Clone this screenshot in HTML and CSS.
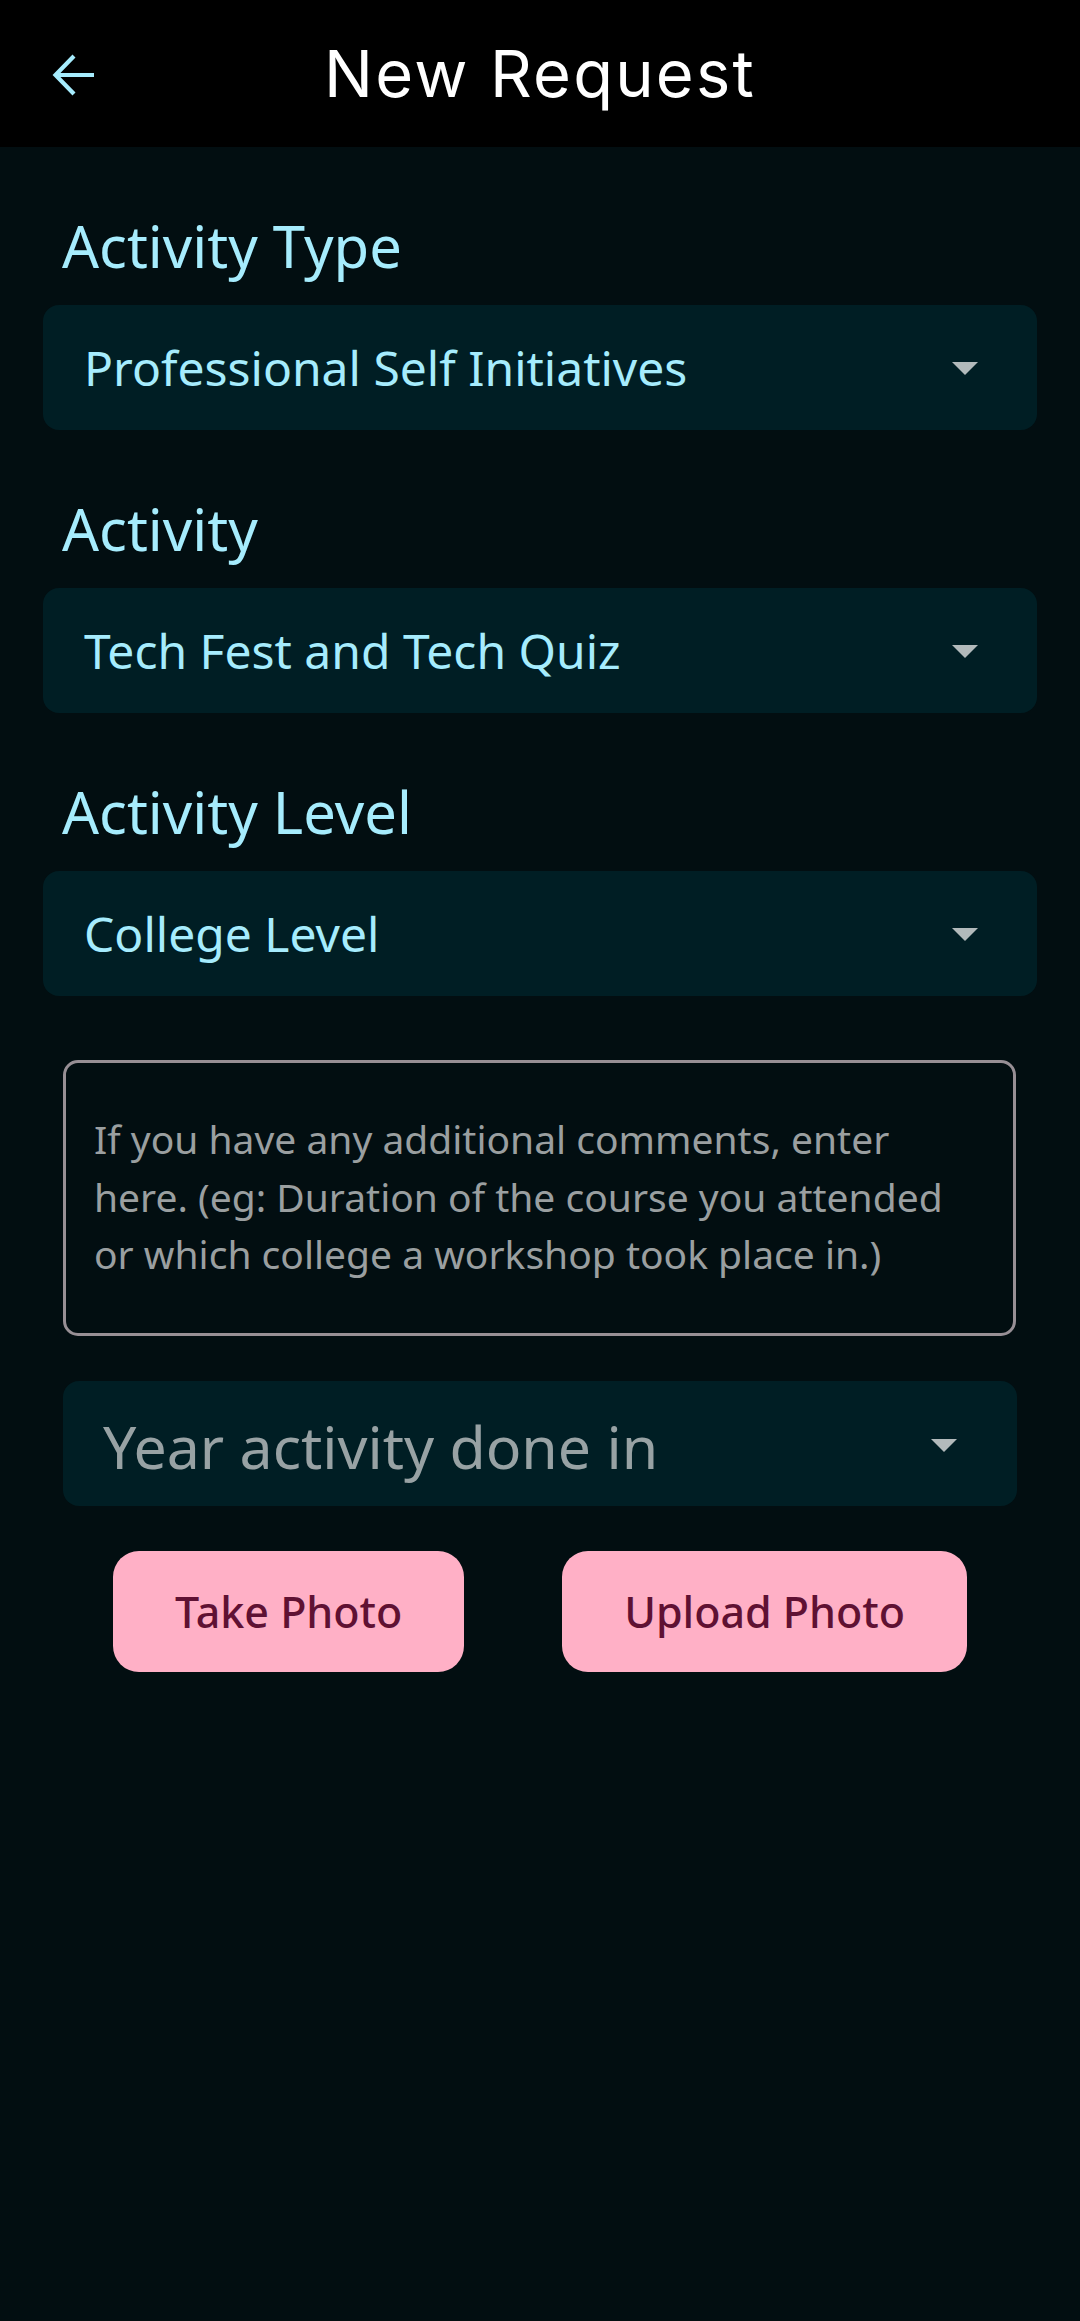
FILE: index.html
```html
<!DOCTYPE html>
<html lang="en">
<head>
<meta charset="utf-8">
<title>New Request</title>
<link rel="stylesheet" href="styles.css">
</head>
<body>
<header class="appbar">
  <button class="back" aria-label="Back">
    <svg viewBox="0 0 44 44" width="44" height="44"><path d="M42 22H4M22 3L3.5 22L22 41" fill="none" stroke="#a6ecfd" stroke-width="4.2" stroke-linecap="butt" stroke-linejoin="miter"/></svg>
  </button>
  <h1 class="title">New Request</h1>
</header>
<main class="content">
  <section class="field">
    <div class="label">Activity Type</div>
    <div class="select"><span class="value">Professional Self Initiatives</span><span class="caret"></span></div>
  </section>
  <section class="field">
    <div class="label">Activity</div>
    <div class="select"><span class="value">Tech Fest and Tech Quiz</span><span class="caret"></span></div>
  </section>
  <section class="field">
    <div class="label">Activity Level</div>
    <div class="select"><span class="value">College Level</span><span class="caret"></span></div>
  </section>
  <div class="comments">
    <span class="ph">If you have any additional comments, enter</span>
    <span class="ph">here. (eg: Duration of the course you attended</span>
    <span class="ph">or which college a workshop took place in.)</span>
  </div>
  <div class="select year"><span class="value">Year activity done in</span><span class="caret"></span></div>
  <div class="actions">
    <button class="btn">Take Photo</button>
    <button class="btn">Upload Photo</button>
  </div>
</main>
</body>
</html>
```

FILE: styles.css
```css
html, body {
  margin: 0;
  padding: 0;
}
body {
  background: #020e11;
  min-height: 2321px;
  font-family: "Noto Sans", "Open Sans", sans-serif;
}
.appbar {
  height: 147px;
  background: #000000;
  display: flex;
  align-items: center;
  justify-content: center;
  position: relative;
}
.back {
  position: absolute;
  left: 52px;
  top: 53px;
  width: 44px;
  height: 44px;
  padding: 0;
  border: 0;
  background: none;
  display: block;
}
.back svg { display: block; }
.title {
  margin: 0;
  font-family: Inter, "Noto Sans", sans-serif;
  font-weight: 400;
  font-size: 65px;
  letter-spacing: 2.2px;
  line-height: 147px;
  color: #ffffff;
}
.content {
  display: flex;
  flex-direction: column;
}
.field {
  padding: 59px 43px 0;
  display: flex;
  flex-direction: column;
  gap: 19px;
}
.label {
  height: 80px;
  line-height: 80px;
  font-size: 58px;
  color: #a6ecfd;
  padding-left: 19px;
}
.select {
  height: 125px;
  border-radius: 16px;
  background: #001e24;
  display: flex;
  align-items: center;
  justify-content: space-between;
  padding: 0 59px 0 41px;
  box-sizing: border-box;
}
.select .value {
  font-size: 48px;
  color: #a6ecfd;
  line-height: 1;
}
.caret {
  width: 0;
  height: 0;
  border-left: 13.5px solid transparent;
  border-right: 13.5px solid transparent;
  border-top: 13px solid #b2babb;
  margin-top: 2px;
}
.comments {
  margin: 64px 64px 0 63px;
  height: 276px;
  box-sizing: border-box;
  border: 3px solid #978f95;
  border-radius: 15px;
  padding: 47px 28px 0;
  display: flex;
  flex-direction: column;
}
.ph {
  font-size: 39px;
  line-height: 57.5px;
  color: #9a9fa0;
  white-space: nowrap;
}
.select.year {
  margin: 45px 63px 0 63px;
  padding: 0 60px 0 40px;
}
.select.year .value {
  font-size: 59px;
  color: #98a2a4;
  padding-top: 6px;
}
.select.year .caret {
  margin-top: 4px;
}
.actions {
  margin: 45px 64px 0;
  display: flex;
  justify-content: space-around;
}
.btn {
  height: 121px;
  padding: 0 62px;
  border: 0;
  border-radius: 26px;
  background: #ffb0c6;
  color: #5f1133;
  font-family: "Noto Sans", "Open Sans", sans-serif;
  font-weight: 500;
  font-size: 43px;
  line-height: 1;
}
```
